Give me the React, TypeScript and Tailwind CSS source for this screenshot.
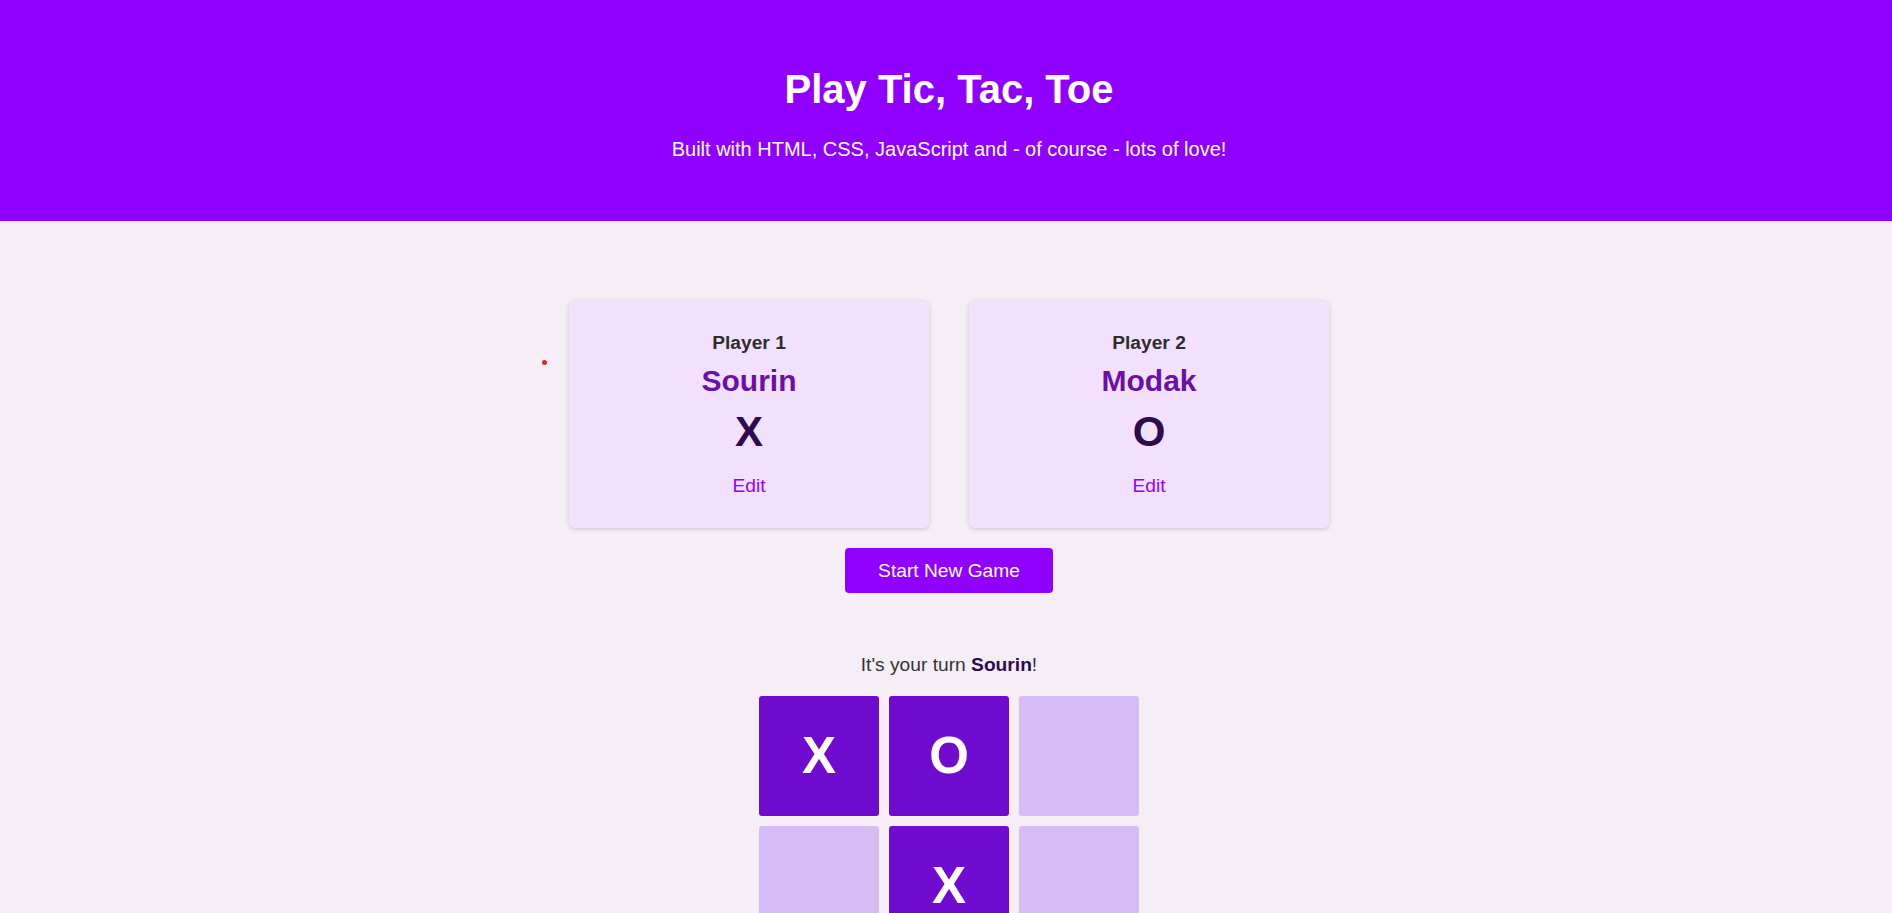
import React, { useState } from 'react';

type Mark = 'X' | 'O' | null;

interface Player {
  label: string;
  name: string;
  symbol: 'X' | 'O';
}

const players: Player[] = [
  { label: 'Player 1', name: 'Sourin', symbol: 'X' },
  { label: 'Player 2', name: 'Modak', symbol: 'O' },
];

function PlayerCard({ player }: { player: Player }) {
  return (
    <li className="w-[360px] h-[227px] bg-[#f2e1fd] rounded-md shadow-[0_1px_5px_rgba(0,0,0,0.18)] flex flex-col items-center pt-[30px]">
      <h2 className="text-[19.2px] leading-[24px] font-bold text-[#2d2d2d]">{player.label}</h2>
      <p className="mt-[8px] text-[30px] leading-[36px] font-bold text-[#6a0fa8]">{player.name}</p>
      <p className="mt-[10px] text-[42px] leading-[46px] font-bold text-[#2e0a4f]">{player.symbol}</p>
      <button className="mt-[19px] text-[19.2px] leading-[24px] text-[#9000ff] cursor-pointer">Edit</button>
    </li>
  );
}

export default function App() {
  const [board] = useState<Mark[]>(['X', 'O', null, null, 'X', null, null, null, null]);

  return (
    <div className="min-h-screen bg-[#f5eef6] font-[family-name:Liberation_Sans,Arial,sans-serif]">
      <header className="bg-[#9000ff] text-white text-center pl-[6px] pt-[66px] pb-[60px]">
        <h1 className="text-[40px] leading-[46px] font-bold">Play Tic, Tac, Toe</h1>
        <p className="mt-[25px] text-[20px] leading-[24px]">Built with HTML, CSS, JavaScript and - of course - lots of love!</p>
      </header>

      <main className="pl-[6px] flex flex-col items-center pt-[80px]">
        <div className="relative">
          <span className="absolute left-[-27px] top-[59px] w-[5px] h-[5px] rounded-full bg-[#e52020]" />
          <ol className="flex gap-[40px]">
            {players.map((p) => (
              <PlayerCard key={p.label} player={p} />
            ))}
          </ol>
        </div>

        <button className="mt-[20px] h-[45px] px-[33px] rounded bg-[#9000ff] text-white text-[19.2px] leading-[24px]">
          Start New Game
        </button>

        <p className="mt-[60px] text-[19.2px] leading-[24px] text-[#333]">
          It's your turn <span className="font-bold text-[#2e0a4f]">Sourin</span>!
        </p>

        <ol className="mt-[19px] grid grid-cols-[repeat(3,120px)] auto-rows-[120px] gap-[10px]">
          {board.map((cell, i) => (
            <li
              key={i}
              className={
                cell
                  ? 'rounded-[3px] bg-[#6f0ccf] text-white text-[51px] font-bold flex items-center justify-center'
                  : 'rounded-[3px] bg-[#d7bbf5]'
              }
            >
              {cell}
            </li>
          ))}
        </ol>
      </main>
    </div>
  );
}
